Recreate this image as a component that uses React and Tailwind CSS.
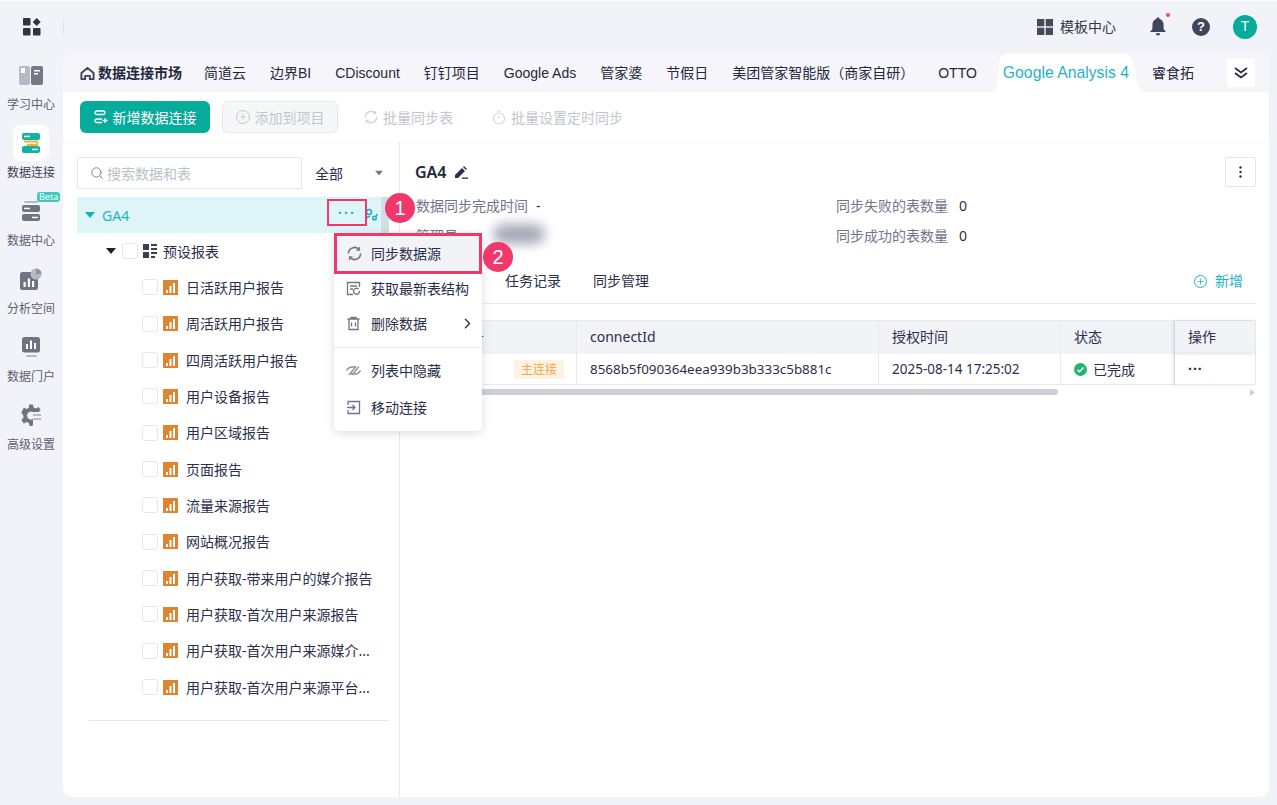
import { ChevronRight, Search, Plus } from "lucide-react";

const tabs = ["简道云", "边界BI", "CDiscount", "钉钉项目", "Google Ads", "管家婆", "节假日", "美团管家智能版（商家自研）", "OTTO"];

const reports = [
  "日活跃用户报告",
  "周活跃用户报告",
  "四周活跃用户报告",
  "用户设备报告",
  "用户区域报告",
  "页面报告",
  "流量来源报告",
  "网站概况报告",
  "用户获取-带来用户的媒介报告",
  "用户获取-首次用户来源报告",
  "用户获取-首次用户来源媒介...",
  "用户获取-首次用户来源平台...",
];

function SideItem({ label, active, beta, children }) {
  return (
    <div className="relative flex h-[68px] flex-col items-center">
      <div className={`flex h-9 w-9 items-center justify-center rounded-lg ${active ? "bg-white" : ""}`}>{children}</div>
      <span className={`mt-1 text-[12px] leading-4 ${active ? "text-[#3a3f55]" : "text-[#5b6072]"}`}>{label}</span>
      {beta && (
        <span className="absolute left-[37px] top-[-1px] rounded-[3px] bg-[#3cc9bb] px-[2px] text-[9px] leading-[10px] text-white">Beta</span>
      )}
    </div>
  );
}

function ReportIcon() {
  return (
    <svg width="15" height="15" viewBox="0 0 15 15" className="shrink-0">
      <rect width="15" height="15" fill="#e0842f" />
      <rect x="3" y="10" width="2" height="3" fill="#fff" />
      <rect x="6.5" y="6" width="2" height="7" fill="#fff" />
      <rect x="10" y="3" width="2" height="10" fill="#fff" />
    </svg>
  );
}

function Check() {
  return <span className="h-4 w-4 shrink-0 rounded-[3px] border border-[#e4e6ec] bg-white" />;
}

function Caret({ color, className = "" }) {
  return (
    <svg width="10" height="6" viewBox="0 0 10 6" className={className}>
      <path d="M0 0h10L5 6z" fill={color} />
    </svg>
  );
}

function SyncIcon({ color = "#70758a", size = 15 }) {
  return (
    <svg width={size} height={size} viewBox="0 0 16 16" fill="none" stroke={color} strokeWidth="1.7" className="shrink-0">
      <path d="M1.500 8a6.500 6.500 0 0 1 11.300-4.300" />
      <path d="M14.500 8a6.500 6.500 0 0 1-11.300 4.300" />
      <path d="M13.300 1v3.300H10" strokeWidth="1.300" />
      <path d="M2.700 15v-3.300H6" strokeWidth="1.300" />
    </svg>
  );
}

function Badge({ n, className }) {
  return (
    <span className={`absolute z-30 flex h-[30px] w-[30px] items-center justify-center rounded-full bg-[#f0386b] font-['Liberation_Sans',sans-serif] text-[20px] text-white ${className}`}>
      {n}
    </span>
  );
}

export default function App() {
  return (
    <div className="flex h-[805px] w-[1277px] flex-col overflow-hidden bg-[#f1f3f8] font-['Noto_Sans','Noto_Sans_CJK_SC',sans-serif] text-[14px] text-[#2a2f4a]">
      <header className="flex h-[53px] shrink-0 items-center border-t border-[#fbfbfd] pb-px">
        <div className="flex w-[63px] items-center justify-center">
          <svg width="18" height="18" viewBox="0 0 18 18" fill="#2f3443">
            <rect x="0" y="0" width="7.5" height="7.5" rx="1" />
            <rect x="0" y="10" width="7.5" height="7.5" rx="1" />
            <rect x="10" y="10" width="7.5" height="7.5" rx="1" />
            <path d="M13.7 0l4 4-4 4-4-4z" />
          </svg>
        </div>
        <span className="h-[16px] w-px bg-[#e1e3ea]" />
        <div className="ml-auto flex items-center pr-[20px]">
          <svg width="16" height="16" viewBox="0 0 16 16" fill="#454a58" className="mr-[7px]">
            <rect width="7.3" height="7.3" />
            <rect x="8.7" width="7.3" height="7.3" />
            <rect y="8.7" width="7.3" height="7.3" />
            <rect x="8.7" y="8.7" width="7.3" height="7.3" />
          </svg>
          <span className="text-[#343848]">模板中心</span>
          <div className="relative ml-[33px]">
            <svg width="18" height="19" viewBox="0 0 18 19" fill="#41465a">
              <path d="M9 0.5c1 0 1.6.7 1.6 1.6C13.4 2.900 14.600 5.200 14.600 8v4l2.400 3H1l2.400-3V8c0-2.800 1.200-5.100 4-5.900C7.400 1.200 8 .5 9 .5z" />
              <path d="M6.800 16.200h4.400a2.200 2.200 0 0 1-4.400 0z" />
            </svg>
            <span className="absolute right-[-3px] top-[-4px] h-1 w-1 rounded-full bg-[#f04747]" />
          </div>
          <span className="ml-[25px] flex h-[18px] w-[18px] items-center justify-center rounded-full bg-[#41465a] font-['Liberation_Sans',sans-serif] text-[13px] font-bold text-white">?</span>
          <span className="ml-[23px] flex h-6 w-6 items-center justify-center rounded-full bg-[#06ab9b] font-['Liberation_Sans',sans-serif] text-[14px] text-white">T</span>
        </div>
      </header>

      <div className="flex min-h-0 flex-1">
        <aside className="flex w-[63px] shrink-0 flex-col pr-px pt-1">
          <SideItem label="学习中心">
            <svg width="24" height="19" viewBox="0 0 24 19">
              <rect x="0" y="0" width="11" height="19" rx="2" fill="#b6bac5" />
              <rect x="12" y="0" width="12" height="19" rx="2" fill="#747987" />
              <rect x="2" y="2" width="4" height="5" fill="#fff" />
              <rect x="15" y="4" width="6" height="1.500" fill="#fff" />
              <rect x="15" y="7" width="4" height="1.500" fill="#fff" />
            </svg>
          </SideItem>
          <SideItem label="数据连接" active>
            <svg width="20" height="20" viewBox="0 0 20 20">
              <rect x="1" y="0" width="18" height="7" rx="2" fill="#0fb3a3" />
              <rect x="1" y="13" width="18" height="7" rx="2" fill="#0fb3a3" />
              <path d="M3 8.500h13v3.500H6" fill="none" stroke="#f5b22d" strokeWidth="1.800" />
              <rect x="3" y="2.700" width="6" height="1.500" fill="#fff" />
              <rect x="11" y="15.700" width="6" height="1.500" fill="#fff" />
            </svg>
          </SideItem>
          <SideItem label="数据中心" beta>
            <svg width="20" height="20" viewBox="0 0 20 20">
              <rect x="3" y="0" width="14" height="2" rx="1" fill="#b6bac5" />
              <rect x="1" y="4" width="18" height="7" rx="2" fill="#6f7482" />
              <rect x="1" y="13" width="18" height="7" rx="2" fill="#6f7482" />
              <rect x="3" y="6.700" width="6" height="1.500" fill="#fff" />
              <rect x="11" y="15.700" width="6" height="1.500" fill="#fff" />
            </svg>
          </SideItem>
          <SideItem label="分析空间">
            <svg width="22" height="22" viewBox="0 0 22 22">
              <rect x="0" y="4" width="18" height="18" rx="2.500" fill="#6f7482" />
              <circle cx="16" cy="6" r="5.500" fill="#b6bac5" />
              <path d="M16 6V.5a5.500 5.500 0 0 1 5.500 5.500z" fill="#8e93a0" />
              <rect x="3.500" y="14" width="2.200" height="5" fill="#fff" />
              <rect x="7.800" y="10.500" width="2.200" height="8.500" fill="#fff" />
              <rect x="12" y="13" width="2.200" height="6" fill="#fff" />
            </svg>
          </SideItem>
          <SideItem label="数据门户">
            <svg width="20" height="20" viewBox="0 0 20 20">
              <rect x="1" y="0" width="18" height="15.500" rx="2.500" fill="#6f7482" />
              <rect x="5" y="18" width="11" height="2" rx="1" fill="#b6bac5" />
              <rect x="5" y="7" width="2" height="5" fill="#fff" />
              <rect x="9" y="3.500" width="2" height="8.500" fill="#fff" />
              <rect x="13" y="6" width="2" height="6" fill="#fff" />
            </svg>
          </SideItem>
          <SideItem label="高级设置">
            <svg width="22" height="22" viewBox="0 0 22 22">
              <path d="M9 .5h4l.6 3 2.400 1 2.600-1.500 2 3-2 2H13a4 4 0 1 0 0 7v5l-.5 2h-3l-.6-3-2.400-1-2.600 1.500-2.500-3.500 2-2.200-.1-2.500-2-2.200L3.800 3.500l2.600 1.400 2.400-1z" fill="#6f7482" />
              <rect x="13" y="10" width="8" height="2" fill="#b6bac5" />
              <rect x="13" y="14" width="8" height="2" fill="#b6bac5" />
            </svg>
          </SideItem>
        </aside>

        <main className="relative h-[744px] w-[1206px] rounded-[10px] bg-white">
          <nav className="flex h-[39px] items-center rounded-t-[10px] bg-[#f6f6fa] pl-[17px] pt-px font-['Liberation_Sans','Noto_Sans_CJK_SC',sans-serif] text-[#23273d]">
            <svg width="15" height="15" viewBox="0 0 16 16" fill="none" stroke="#3c4152" strokeWidth="2" className="mr-[3px]">
              <path d="M1.500 7.500L8 2l6.500 5.500V14h-4v-3.500h-5V14h-4z" strokeLinejoin="round" />
            </svg>
            <span className="font-bold">数据连接市场</span>
            <div className="ml-[22px] flex items-center gap-6">
              {tabs.map((t) => (
                <span key={t} className="whitespace-nowrap">{t}</span>
              ))}
            </div>
            <div className="relative ml-[26px] flex h-[38px] items-center">
              <svg width="160" height="39" viewBox="0 0 160 39" className="absolute left-[-16px] top-[-1px]">
                <path d="M0 39C8 39 9 35 10 30L12 10C13 4 16 1 23 1H136C142 1 145 4 147 10L150 30C152 35 154 39 160 39Z" fill="#fff" />
              </svg>
              <span className="relative whitespace-nowrap text-[15.750px] text-[#1fb3c6]">Google Analysis 4</span>
            </div>
            <span className="ml-[23px] whitespace-nowrap">睿食拓</span>
            <span className="ml-[33px] flex h-7 w-7 items-center justify-center bg-white">
              <svg width="14" height="12" viewBox="0 0 14 12" fill="none" stroke="#23273d" strokeWidth="1.600">
                <path d="M1 1l6 4.500L13 1" />
                <path d="M1 6l6 4.500L13 6" />
              </svg>
            </span>
          </nav>

          <div className="relative z-10 flex h-[50px] items-center pl-[17px] text-[#c3c6ce] shadow-[0_1px_3px_rgba(30,40,70,0.04)]">
            <button className="flex h-8 w-[130px] items-center justify-center gap-[5px] rounded-md bg-[#06ab9b] text-white">
              <svg width="14" height="14" viewBox="0 0 14 14" fill="none" stroke="#fff" strokeWidth="1.300">
                <rect x="1" y="1" width="10" height="3.500" rx="1.700" />
                <path d="M8 9H2.700a1.700 1.700 0 0 0 0 3.500H8" />
                <path d="M11 8v5M8.500 10.500h5" />
              </svg>
              新增数据连接
            </button>
            <button className="ml-3 flex h-8 w-[116px] items-center justify-center gap-[5px] rounded-md border border-[#e6e8ed] bg-[#f6f7f9]">
              <span className="flex h-[14px] w-[14px] items-center justify-center rounded-full border border-[#c3c6ce]">
                <Plus size={10} strokeWidth={2} />
              </span>
              添加到项目
            </button>
            <span className="ml-[26px] flex items-center gap-[5px]">
              <SyncIcon color="#d4d6dc" size={14} />
              批量同步表
            </span>
            <span className="ml-[39px] flex items-center gap-[5px]">
              <svg width="14" height="15" viewBox="0 0 14 15" fill="none" stroke="#d4d6dc" strokeWidth="1.200">
                <circle cx="7" cy="8.500" r="5.500" />
                <path d="M7 5.500v3M5 1h4" />
              </svg>
              批量设置定时同步
            </span>
          </div>

          <div className="flex h-[655px]">
            <section className="relative h-full w-[337px] shrink-0 border-r border-[#e8eaef] pl-[14px] pt-[15px]">
              <div className="flex items-center">
                <div className="flex h-8 w-[225px] items-center rounded-[2px] border border-[#e4e6eb] pl-3 text-[#bcc0c9]">
                  <Search size={14} color="#7d8190" strokeWidth={1.700} className="mr-[3px]" />
                  搜索数据和表
                </div>
                <span className="ml-[13px] text-[#2a2f4a]">全部</span>
                <Caret color="#70758a" className="ml-[31px] scale-[.8]" />
              </div>
              <div className="mt-2 flex h-9 w-[312px] items-center bg-[#def5f7] pl-2 text-[#1fb3c6]">
                <Caret color="#13afc2" />
                <span className="ml-[7px]">GA4</span>
                <span className="absolute left-[264px] top-[57px] flex h-[27px] w-10 items-center justify-center border-2 border-[#f0386b] text-[14px] font-bold leading-none tracking-[2px]">···</span>
                <svg width="13" height="14" viewBox="0 0 13 14" fill="none" stroke="#16afc2" strokeWidth="1.500" className="ml-auto mr-[3px]">
                  <circle cx="4" cy="4" r="2.500" />
                  <path d="M1 13c0-3 1.500-4.500 4-4.500" />
                  <circle cx="9.500" cy="10" r="1.800" />
                  <path d="M11 8l1.500-2" />
                </svg>
                <span className="h-9 w-2 bg-[#cfdfe3]" />
              </div>
              <div className="flex h-[36.330px] items-center pl-[29px]">
                <Caret color="#1b1f3a" />
                <span className="ml-[6px] h-4 w-4 rounded-[3px] border border-[#e4e6ec]" />
                <svg width="14" height="14" viewBox="0 0 14 14" fill="#3c4152" className="ml-[5px]">
                  <rect x="0" y="0" width="6" height="6" />
                  <rect x="0" y="8" width="6" height="6" />
                  <rect x="8" y="0" width="6" height="2" />
                  <rect x="8" y="4" width="6" height="2" />
                  <rect x="8" y="8" width="6" height="2" />
                  <rect x="8" y="12" width="4" height="2" />
                </svg>
                <span className="ml-[6px]">预设报表</span>
              </div>
              {reports.map((r) => (
                <div key={r} className="flex h-[36.330px] items-center pl-[65px]">
                  <Check />
                  <span className="ml-[5px]"><ReportIcon /></span>
                  <span className="ml-2 whitespace-nowrap">{r}</span>
                </div>
              ))}
              <div className="ml-3 mt-[15px] h-px w-[300px] bg-[#e4e6eb]" />
              <span className="absolute right-[-12px] top-[225px] flex h-[29px] w-3 items-center justify-center border border-l-0 border-[#e8eaef] bg-white text-[#a8acb8]">
                <svg width="6" height="10" viewBox="0 0 6 10" fill="none" stroke="#a8acb8"><path d="M5 1L1 5l4 4" /></svg>
              </span>
            </section>

            <section className="min-w-0 flex-1 pl-[15px] pr-[13px] pt-[15px]">
              <div className="flex h-[30px] items-center">
                <span className="text-[16px] font-semibold text-[#23273d]">GA4</span>
                <svg width="14" height="13" viewBox="0 0 14 13" fill="#2a2f4a" className="ml-[7px]">
                  <path d="M1 9l7-7 3 3-7 7H1z" />
                  <path d="M9 1l1-1 3 3-1 1z" />
                  <rect x="8" y="11.500" width="6" height="1.300" />
                </svg>
                <span className="ml-auto flex h-[30px] w-[31px] items-center justify-center rounded-[2px] border border-[#e4e6eb] bg-white">
                  <svg width="3" height="12" viewBox="0 0 3 12" fill="#2a2f4a">
                    <circle cx="1.500" cy="1.500" r="1.200" />
                    <circle cx="1.500" cy="6" r="1.200" />
                    <circle cx="1.500" cy="10.500" r="1.200" />
                  </svg>
                </span>
              </div>
              <div className="mt-[3px] grid grid-cols-[421px_1fr] text-[#70758a]">
                <div className="flex h-[30px] items-center pl-px">数据同步完成时间<span className="ml-2 text-[#2a2f4a]">-</span></div>
                <div className="flex h-[30px] items-center">同步失败的表数量<span className="ml-[11px] text-[#2a2f4a]">0</span></div>
                <div className="relative flex h-[30px] items-center pl-px">
                  管理员
                  <span className="absolute left-[78px] top-[4px] h-5 w-[52px] rounded-full bg-[#a6a9b6] blur-[6px]" />
                </div>
                <div className="flex h-[30px] items-center">同步成功的表数量<span className="ml-[11px] text-[#2a2f4a]">0</span></div>
              </div>
              <div className="mt-4 flex h-[38px] items-start border-b border-[#e9ebf0] pt-[5px]">
                <span className="ml-[90px] leading-5">任务记录</span>
                <span className="ml-8 leading-5">同步管理</span>
                <span className="ml-auto mr-[13px] flex items-center gap-[8px] leading-5 text-[#1fb3c6]">
                  <span className="flex h-[13px] w-[13px] items-center justify-center rounded-full border border-[#1fb3c6]">
                    <Plus size={9} strokeWidth={2} />
                  </span>
                  新增
                </span>
              </div>
              <div className="mt-4 grid grid-cols-[161px_302px_182px_114px_80px] rounded-t-[2px] border-x border-t border-[#e7e9ee]">
                <div className="flex h-[33px] items-center justify-end border-r border-[#e7e9ee] bg-[#f1f3f7] pb-[2px] pr-[92px]">账号</div>
                <div className="flex h-[33px] items-center border-r border-[#e7e9ee] bg-[#f1f3f7] pb-[2px] pl-[13px]">connectId</div>
                <div className="flex h-[33px] items-center border-r border-[#e7e9ee] bg-[#f1f3f7] pb-[2px] pl-[13px]">授权时间</div>
                <div className="flex h-[33px] items-center border-r border-[#e7e9ee] bg-[#f1f3f7] pb-[2px] pl-[13px]">状态</div>
                <div className="flex h-[33px] items-center bg-[#f1f3f7] pb-[2px] pl-[13px] shadow-[-2px_0_3px_rgba(30,40,70,0.12)]">操作</div>
                <div className="flex h-[31px] items-center justify-end border-b border-r border-[#e7e9ee] pr-3">
                  <span className="rounded-[2px] bg-[#fdf3e3] px-[7px] text-[12px] leading-[19px] text-[#f0a84a]">主连接</span>
                </div>
                <div className="flex h-[31px] items-center border-b border-r border-[#e7e9ee] pl-[13px] text-[13.400px]">8568b5f090364eea939b3b333c5b881c</div>
                <div className="flex h-[31px] items-center border-b border-r border-[#e7e9ee] pl-[13px] text-[13.500px]">2025-08-14 17:25:02</div>
                <div className="flex h-[31px] items-center border-b border-r border-[#e7e9ee] pl-[13px]">
                  <svg width="13" height="13" viewBox="0 0 13 13" className="mr-[6px]">
                    <circle cx="6.500" cy="6.500" r="6.500" fill="#27b56a" />
                    <path d="M3.500 6.700l2 2 4-4.200" fill="none" stroke="#fff" strokeWidth="1.500" />
                  </svg>
                  已完成
                </div>
                <div className="flex h-[31px] items-center border-b border-[#e7e9ee] pl-[13px] font-bold leading-none tracking-[1px] shadow-[-2px_0_3px_rgba(30,40,70,0.12)]">···</div>
              </div>
              <div className="mt-1 flex h-[6px] items-center">
                <span className="h-[6px] w-[643px] rounded-full bg-[#ccd0d4]" />
                <svg width="5" height="7" viewBox="0 0 5 7" className="ml-[192px]"><path d="M0 0l5 3.500L0 7z" fill="#cdd0d6" /></svg>
              </div>
            </section>
          </div>

          <div className="absolute left-[271px] top-[180px] z-20 h-[198px] w-[148px] rounded-md bg-white shadow-[0_2px_10px_rgba(30,40,70,0.16)]">
            <div className="flex h-[41px] items-center border-[3px] border-[#f0386b] bg-[#f2f3f7] pl-[10px]">
              <SyncIcon />
              <span className="ml-[9px] whitespace-nowrap">同步数据源</span>
            </div>
            <div className="flex h-[29px] items-center pl-[12px]">
              <svg width="15" height="15" viewBox="0 0 15 15" fill="none" stroke="#70758a" strokeWidth="1.300" className="shrink-0">
                <path d="M7 13.500H1.500v-12h12V6" />
                <path d="M4 5h7M4 8h3" />
                <path d="M13.500 10a3 3 0 1 1-1-2" />
              </svg>
              <span className="ml-[10px] whitespace-nowrap">获取最新表结构</span>
            </div>
            <div className="flex h-[40px] items-center pl-[12px]">
              <svg width="15" height="15" viewBox="0 0 15 15" fill="none" stroke="#70758a" strokeWidth="1.300" className="shrink-0">
                <path d="M1.500 3h12M5 3V1.500h5V3M3 3v10.500h9V3M5.500 6.500v4M9.500 6.500v4" />
              </svg>
              <span className="ml-[10px] whitespace-nowrap">删除数据</span>
              <ChevronRight size={17} strokeWidth={1.800} className="ml-auto mr-[6px]" />
            </div>
            <div className="mt-1 h-px bg-[#e6e8ed]" />
            <div className="mt-1 flex h-[36px] items-center pl-[12px]">
              <svg width="15" height="15" viewBox="0 0 15 15" fill="none" stroke="#8a8e9e" strokeWidth="1.300" className="shrink-0">
                <path d="M.5 7.500C2 5 4 4 6 4h4M14.500 7.500C13 10 11 11 9 11H5" />
                <path d="M3 12l7-8.500M6 12l7-8.500" />
              </svg>
              <span className="ml-[10px] whitespace-nowrap">列表中隐藏</span>
            </div>
            <div className="mt-px flex h-[36px] items-center pl-[12px]">
              <svg width="15" height="15" viewBox="0 0 15 15" fill="none" stroke="#70758a" strokeWidth="1.300" className="shrink-0">
                <path d="M2 5V1.500h11.500v12H2V10" />
                <path d="M1 7.500h8M6.500 5l2.500 2.500L6.500 10" />
              </svg>
              <span className="ml-[10px] whitespace-nowrap">移动连接</span>
            </div>
          </div>
          <Badge n="1" className="left-[322px] top-[140px]" />
          <Badge n="2" className="left-[420px] top-[189px]" />
        </main>
      </div>
    </div>
  );
}
